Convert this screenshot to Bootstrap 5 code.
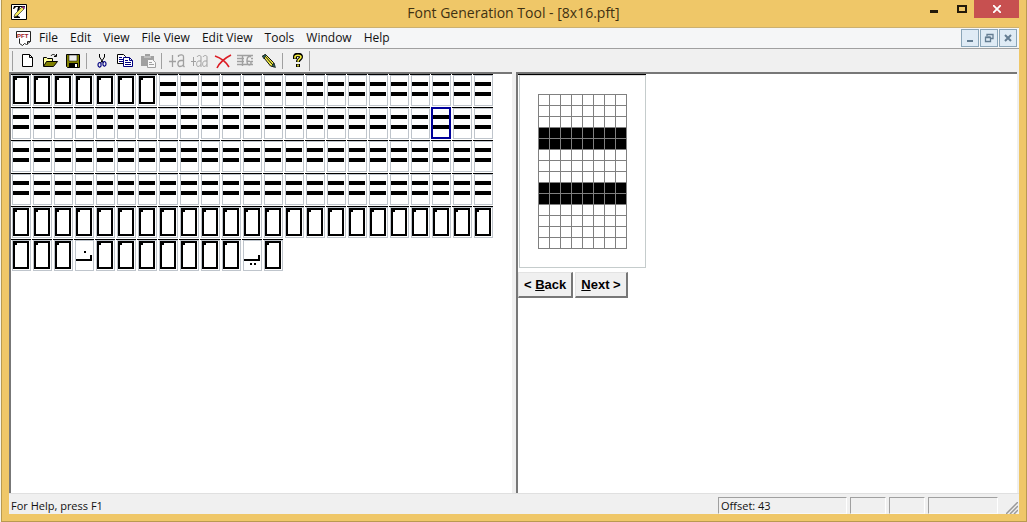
<!DOCTYPE html>
<html lang="en">
<head>
<meta charset="utf-8">
<meta name="viewport" content="width=device-width, initial-scale=1">
<title>Font Generation Tool - [8x16.pft]</title>
<link href="https://cdn.jsdelivr.net/npm/bootstrap@5.3.0/dist/css/bootstrap.min.css" rel="stylesheet">
<style>
:root{--gold:#efc768;--face:#f0f0f0;--edge:#a0a0a0;--dark:#696969}
body{font-family:"Open Sans","Noto Sans",sans-serif;font-size:12px;line-height:16px;color:#111;background:#f6f4ea}
button{padding:0;border:0;background:none;color:inherit}
svg{display:block}
.frame{margin-left:1px;padding:0 7px 7px 7px;background:var(--gold);border:1px solid #b99a50;border-top:0}
.titlebar{height:28px;color:#3f3112;border-bottom:1px solid #cbb070}
.titlebar h1{font-size:14px;line-height:26px;font-weight:400;margin:0;padding-left:82px}
.app-icon{margin-left:2px;margin-top:4px}
.caption-btn{width:36px;height:18px}
.caption-btn.slim{width:20px}
.caption-btn.closer{width:45px;background:#c75050}
.menus{height:21px;background:#f5f6f7;border-bottom:1px solid #a0a0a0;padding-left:7px}
.menus a{color:#111;text-decoration:none;padding:0 6px}
.mdi-set{gap:1px;margin-right:2px}
.mdi{width:18px;height:18px;border:1px solid #8aa5b8;background:#dfebf5}
.tools{height:23px;background:var(--face);padding-left:3px}
.tools button{width:23px;height:22px}
.tools .rule{width:6px;height:16px;border-left:1px solid var(--edge);margin-left:2px;margin-right:-2px}
.grip{width:3px;height:20px;border-left:1px solid var(--edge)}
.panes{background:var(--face)}
.pane{background:#fff;border:solid #777;border-width:2px 0 0 2px}
.glyph-pane{flex:0 0 49.8%}
.edit-pane{margin-right:2px}
.glyphs{display:grid;grid-template-columns:repeat(23,20px);gap:0 1px}
.slot{border-top:1px solid #000;padding:0 0 1px 1px;height:33px;display:block}
.slot svg{box-sizing:content-box;border:1px solid #bfc5cc;padding:0 1px 1px 0;width:16px;height:28px}
.slot.chosen{border-color:#fff;position:relative}
.slot.chosen svg{border-color:#fff}
.slot.chosen::after{content:"";position:absolute;inset:-1px 0 1px 0;border:2px solid #00009a}
.preview{width:128px;border-top:1px solid #000;padding-left:1px}
.preview div{border:1px solid #c5cccc;border-top-color:#ddd;padding:18px}
.push-row{gap:2px;padding-top:4px}
.push{font:bold 13px/16px "Liberation Sans",Arial,sans-serif;height:26px;padding:0 5px;color:#000;background:var(--face);border:1px solid #e3e3e3;border-right:2px solid #777;border-bottom:2px solid #777;white-space:nowrap}
.status{height:21px;font-size:11px;background:var(--face);border-top:1px solid #e0e0e0;padding:3px 1px 0 2px}
.readout{height:17px;border:1px solid var(--edge);border-right-color:#fff;border-bottom-color:#f8f8f8;padding-left:2px}
.readouts{gap:3px}
.w-a{width:129px}.w-b{width:36px}.w-c{width:70px}
</style>
</head>
<body>
<svg width="0" height="0" class="position-absolute" aria-hidden="true">
  <symbol id="box" viewBox="0 0 16 28"><path d="M0 0H16V28H0ZM2 4V26H14V2H4V4Z" fill-rule="evenodd"/></symbol>
  <symbol id="bars" viewBox="0 0 16 28"><path d="M0 6H16V10H0ZM0 16H16V20H0Z"/></symbol>
  <symbol id="noon" viewBox="0 0 16 28"><path d="M8 10h2v2h-2zM0 18h14v-4h2v6H0z"/></symbol>
  <symbol id="yeh" viewBox="0 0 16 28"><path d="M0 18h14v-4h2v6H0zM6 22h2v2h-2zM10 22h2v2h-2z"/></symbol>
</svg>
<div class="frame min-vh-100 d-flex flex-column">
  <header class="titlebar d-flex">
    <svg class="app-icon" width="16" height="16" viewBox="0 0 16 16"><path d="M.5.5h15v15H.5z" fill="#fff" stroke="#000"/><path d="M3 2h11l-1 3h-1l-1-2H9L7 12l2 1v1H3v-1l2-1L7 3H5L3 5H2z" fill="#000"/><path d="m3 13 1-3 7-7 2 2-7 7z" fill="#f4e95a" stroke="#333" stroke-width=".7"/><path d="m11 3 1-1 2 2-1 1z" fill="#a02090"/></svg>
    <h1 class="flex-fill text-center">Font Generation Tool - [8x16.pft]</h1>
    <button class="caption-btn" aria-label="Minimize"><svg class="ms-auto me-2" width="20" height="18"><path d="M4 10h8v3H4z" fill="#231a0a"/></svg></button>
    <button class="caption-btn slim" aria-label="Maximize"><svg width="20" height="18"><path d="M4 6h8v6H4z" fill="none" stroke="#231a0a" stroke-width="2"/></svg></button>
    <button class="caption-btn closer d-flex justify-content-center align-items-center" aria-label="Close"><svg width="8" height="8"><path d="m0 0 8 8M8 0 0 8" stroke="#fff" stroke-width="1.8"/></svg></button>
  </header>

  <nav class="menus d-flex align-items-center" aria-label="Menu">
    <svg width="17" height="17" viewBox="0 0 17 17"><path d="M0 1h14v11l-3 4-3-1-3 1-2-2z" fill="#fff"/><path d="M.5 8V1.500h14v10M3.500 8.500v5l3 2 2-2 2 1 4-3h-3v3" fill="none" stroke="#222"/><text x="1" y="7.500" font-family="Liberation Sans" font-size="6" font-weight="bold" fill="#a01824">PFT</text></svg>
    <a href="#">File</a><a href="#">Edit</a><a href="#">View</a><a href="#">File View</a><a href="#">Edit View</a><a href="#">Tools</a><a href="#">Window</a><a href="#">Help</a>
    <div class="mdi-set d-flex ms-auto">
      <button class="mdi" aria-label="Minimize document"><svg width="16" height="16"><path d="M5 10h6v2H5z" fill="#647d92"/></svg></button>
      <button class="mdi" aria-label="Restore document"><svg width="16" height="16"><path d="M6 6V4.500h6v4h-2M4.500 7.500h5v4h-5zM6 4.500h6M4.500 7h5" fill="none" stroke="#647d92" stroke-width="1.300"/></svg></button>
      <button class="mdi" aria-label="Close document"><svg width="16" height="16"><path d="m5 5 6 6m0-6-6 6" stroke="#647d92" stroke-width="2"/></svg></button>
    </div>
  </nav>

  <div class="tools d-flex align-items-center" role="toolbar" aria-label="Standard">
    <span class="grip"></span>
    <button aria-label="New"><svg class="mx-auto" width="16" height="16"><path d="M3.500 1.500h7l3 3v9h-10zM10.500 1.500v3h3" fill="#fff" stroke="#000"/></svg></button>
    <button aria-label="Open"><svg class="mx-auto" width="16" height="16"><path d="M1.500 13V4.500h3l1 1h5v3" fill="#ffff9c" stroke="#000"/><path d="m1.500 13.500 3-5h11l-4 5z" fill="#808000" stroke="#000"/><path d="M9 3c1-2 3-2 5 0M14.500 1v2.500H12" fill="none" stroke="#000"/></svg></button>
    <button aria-label="Save"><svg class="mx-auto" width="16" height="16"><path d="M1.500 1.500h13v13h-12l-1-1z" fill="#808000" stroke="#000"/><path d="M4 2h8v6H4z" fill="#eee" stroke="#000" stroke-width=".5"/><path d="M4 10h9v4H4z"/><path d="M10 11h2v3h-2z" fill="#fff"/></svg></button>
    <span class="rule"></span>
    <button aria-label="Cut"><svg class="mx-auto" width="16" height="16"><path d="M5.500 1v3l4 6M10.500 1v3l-4 6" fill="none" stroke="#000"/><path d="M7 10c-2-1-3 0-3 2s2 3 3 1zM9 9c2-1 3 0 3 2s-2 3-3 1z" fill="none" stroke="#000080" stroke-width="1.200"/></svg></button>
    <button aria-label="Copy"><svg class="mx-auto" width="16" height="16"><path d="M.5 1.500h6l2 2v7h-8z" fill="#fff" stroke="#000"/><path d="M6.500 4.500h6l3 3v6h-9zM12.500 4.500v3h3" fill="#fff" stroke="#000080"/><path d="M2 4.500h3M2 6.500h4M2 8.500h4M8 7.500h3M8 9.500h6M8 11.500h6" stroke="#000080"/></svg></button>
    <button disabled aria-label="Paste"><svg class="mx-auto" width="16" height="16"><path d="M1 3h4V1h5v2h4v10H1z" fill="#a0a0a0"/><path d="M4 4h7" stroke="#ddd"/><path d="M7.500 6.500h5l3 3v5h-8z" fill="#f8f8f8" stroke="#a0a0a0"/><path d="M9 9.500h3M9 11.500h5" stroke="#a0a0a0"/></svg></button>
    <span class="rule"></span>
    <button disabled aria-label="Add glyph"><svg class="mx-auto" width="18" height="16"><path d="M1 8.500h7M4.500 2v12M10.500 4V2.500c2-1 5-1 5 1V13l1 1M15 7.500h-2c-4 0-4 6-1 6 2 0 3-1 3.500-2" fill="none" stroke="#a0a0a0" stroke-width="1.300"/></svg></button>
    <button disabled aria-label="Add glyphs"><svg class="mx-auto" width="17" height="16"><path d="M0 8.500h5M2.500 4v9M6 4c1-2 4-2 4 0v10M10 8H8c-3 0-3 5.500-1 5.500 1 0 2-1 3-2M12 4c1-2 4-2 4 0v10M16 8h-2c-3 0-3 5.500-1 5.500 1 0 2-1 3-2" fill="none" stroke="#a0a0a0"/></svg></button>
    <button aria-label="Delete"><svg class="mx-auto" width="18" height="16"><path d="M1 3c6 2 11 6 14 11M17 2C11 5 6 9 3 15" fill="none" stroke="#dc1c24" stroke-width="1.600"/></svg></button>
    <button disabled aria-label="Range"><svg class="mx-auto" width="17" height="16"><path d="M0 2.500h16M0 5.500h7M0 8.500h7M0 11.500h16M5.500 2v11M14 4c-5-3-5 8-2 8s3-5-2-3.500M14 5.500h2M14 8.500h2" fill="none" stroke="#a0a0a0" stroke-width="1.400"/></svg></button>
    <button aria-label="Edit"><svg class="mx-auto" width="16" height="16"><path d="m1.500 3 3-1.500 8 8 1 4.500-4-1z" fill="#f4ef42" stroke="#111"/><path d="m3 2 9 10" stroke="#111"/><path d="m1.500 3 3-1.500 1 1-3 3zM11 13l2-3 1.500 4.500z" fill="#28665c" stroke="#222" stroke-width=".7"/></svg></button>
    <span class="rule"></span>
    <button aria-label="Help"><svg class="mx-auto" width="16" height="16"><path d="M5 6V4c0-3 6-3 6 0 0 2-3 2-3 5M8 11v3" fill="none" stroke="#000" stroke-width="4"/><path d="M5 5.500V4c0-2.300 6-2.300 6 0 0 2-3 2-3 4.700M8 11.500v2" fill="none" stroke="#f5ee3c" stroke-width="1.600"/></svg></button>
    <span class="grip"></span>
  </div>

  <main class="panes d-flex flex-fill">
    <section class="pane glyph-pane" aria-label="Glyphs"><div class="glyphs" id="glyphs"></div></section>
    <section class="pane edit-pane flex-fill ms-1" aria-label="Glyph editor">
      <div class="preview"><div>
        <svg width="89" height="155"><defs><pattern id="grid" width="11" height="11" patternUnits="userSpaceOnUse"><path d="M0 .5H11M.5 0V11" stroke="#808080"/></pattern></defs><path d="M0 33h88v22H0zM0 88h88v22H0z"/><path d="M0 0h89v155H0z" fill="url(#grid)"/></svg>
      </div></div>
      <div class="push-row d-flex"><button class="push">&lt; <u>B</u>ack</button><button class="push"><u>N</u>ext &gt;</button></div>
    </section>
  </main>

  <footer class="status d-flex align-items-center">
    <span class="flex-fill">For Help, press F1</span>
    <div class="readouts d-flex"><span class="readout w-a">Offset: 43</span><span class="readout w-b"></span><span class="readout w-b"></span><span class="readout w-c"></span></div>
    <svg class="align-self-end ms-2" width="12" height="12"><path d="M0 12 12 0M4 12l8-8M8 12l4-4" stroke="#999" stroke-width="1.500"/></svg>
  </footer>
</div>
<script>
const runs = [["box",7],["bars",85],["box",26],["noon",1],["box",7],["yeh",1],["box",1]];
const selected = 43;
const names = runs.flatMap(([name, count]) => Array(count).fill(name));
document.getElementById("glyphs").innerHTML = names.map((name, i) =>
  `<button class="slot${i === selected ? " chosen" : ""}" aria-label="Glyph ${i}"><svg><use href="#${name}"/></svg></button>`).join("");
</script>
<script src="https://cdn.jsdelivr.net/npm/bootstrap@5.3.0/dist/js/bootstrap.bundle.min.js"></script>
</body>
</html>
